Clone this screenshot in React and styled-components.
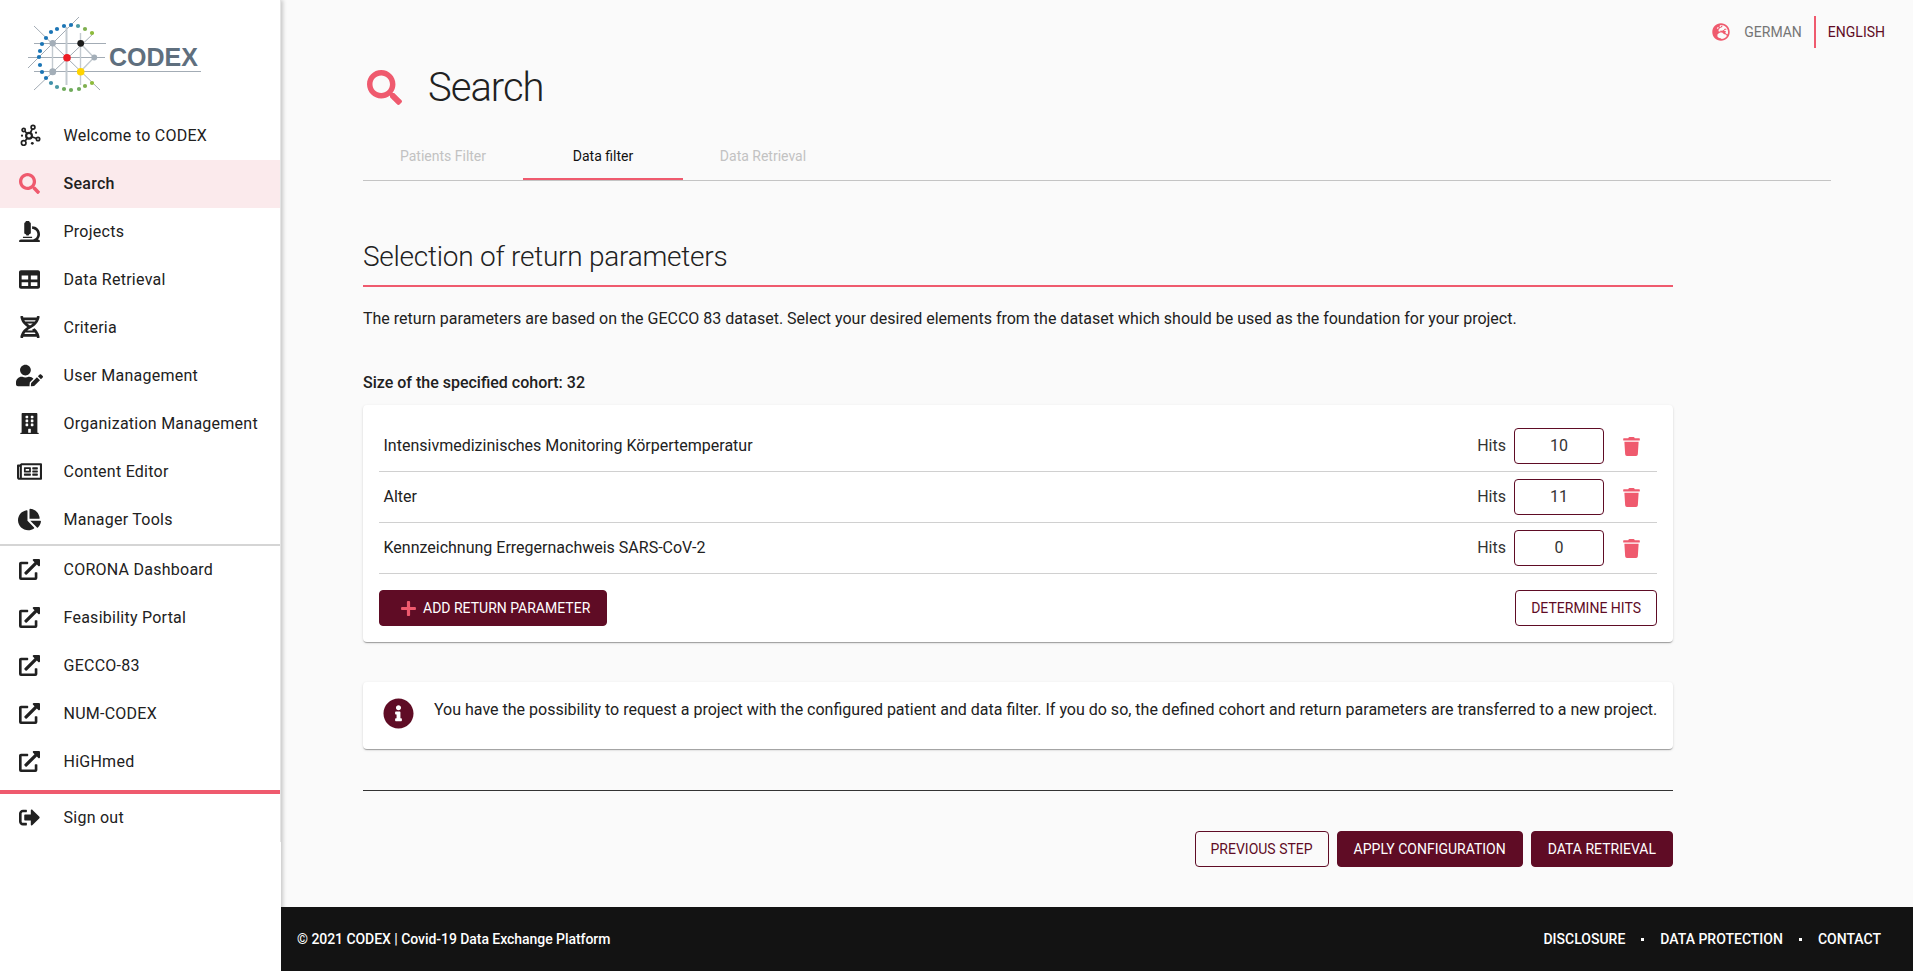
import React from 'react';
import styled, { createGlobalStyle } from 'styled-components';
import {
  FaSearch, FaMicroscope, FaTable, FaDna, FaUserEdit, FaBuilding, FaRegNewspaper,
  FaChartPie, FaExternalLinkAlt, FaSignOutAlt, FaTrash, FaPlus, FaInfoCircle, FaGlobeEurope,
} from 'react-icons/fa';

const Global = createGlobalStyle`
  html, body { margin: 0; padding: 0; background: #fff; }
  * { box-sizing: border-box; }
  body { font-family: Roboto, "Liberation Sans", sans-serif; color: #212121; }
`;

const WINE = '#5f0c25';
const PINK = '#ef5a6e';

const Page = styled.div`
  display: flex;
  width: 1913px;
  height: 971px;
  overflow: hidden;
`;

const SideColumn = styled.div`
  width: 281px;
  flex: none;
  background: #fff;
  position: relative;
  z-index: 1;
  box-shadow: 2px 0 4px rgba(0, 0, 0, 0.2);
`;

const Sidebar = styled.nav`
  height: 842px;
  background: #fff;
  border-right: 1px solid #e4e4e4;
`;

const LogoBox = styled.div`
  height: 112px;
  svg { display: block; }
`;

const NavItem = styled.div`
  height: 48px;
  display: flex;
  align-items: center;
  padding: 0 0 2px 16px;
  font-size: 16px;
  letter-spacing: 0.25px;
  color: #212121;
  font-weight: ${p => (p.$active ? 500 : 400)};
  background: ${p => (p.$active ? '#fbeaec' : 'transparent')};
`;

const NavIcon = styled.span`
  width: 27px;
  margin-right: 20.5px;
  display: flex;
  justify-content: center;
  align-items: center;
  color: ${p => (p.$active ? PINK : '#212121')};
  font-size: ${p => p.$size || 21}px;
`;

const GreyRule = styled.div`
  height: 2px;
  background: #d5d5d5;
`;

const PinkRule = styled.div`
  height: 4px;
  margin-top: 4px;
  background: ${PINK};
`;

const Main = styled.main`
  flex: 1;
  display: flex;
  flex-direction: column;
  background: #fafafa;
`;

const Content = styled.div`
  flex: 1;
  padding: 16px 82px 0 82px;
`;

const LangBar = styled.div`
  height: 32px;
  margin-right: -54px;
  display: flex;
  justify-content: flex-end;
  align-items: center;
  font-size: 14px;
`;

const Globe = styled.span`
  display: flex;
  color: ${PINK};
  font-size: 18px;
  margin-right: 14px;
`;

const Lang = styled.span`
  color: ${p => (p.$active ? WINE : '#757575')};
  padding: ${p => (p.$active ? '0 0 0 12px' : '0 12px 0 0')};
  line-height: 32px;
  border-left: ${p => (p.$active ? `2px solid ${PINK}` : 'none')};
`;

const TitleRow = styled.div`
  height: 58px;
  margin-top: 10px;
  display: flex;
  align-items: center;
  color: #212121;
  svg { color: ${PINK}; font-size: 35px; margin-left: 4px; margin-right: 26px; }
`;

const Title = styled.h1`
  margin: 0;
  font-size: 40px;
  letter-spacing: -1px;
  font-weight: 300;
`;

const Tabs = styled.div`
  display: flex;
  height: 49px;
  margin-top: 16px;
  border-bottom: 1px solid #c4c4c4;
`;

const Tab = styled.div`
  width: 160px;
  height: 48px;
  display: flex;
  align-items: center;
  justify-content: center;
  font-size: 14px;
  color: ${p => (p.$active ? '#111' : '#c2c2c2')};
  border-bottom: ${p => (p.$active ? `2px solid ${PINK}` : 'none')};
  padding-top: ${p => (p.$active ? '2px' : '0')};
`;

const Section = styled.section`
  width: 1310px;
`;

const Heading = styled.h2`
  margin: 53px 0 0;
  height: 53px;
  font-size: 28px;
  line-height: 46px;
  letter-spacing: -0.25px;
  font-weight: 300;
  border-bottom: 2px solid ${PINK};
`;

const Lead = styled.p`
  margin: 20px 0 0;
  font-size: 16px;
  line-height: 24px;
`;

const Cohort = styled.div`
  margin-top: 40px;
  font-size: 16px;
  line-height: 24px;
  font-weight: 500;
`;

const Card = styled.div`
  background: #fff;
  border-radius: 4px;
  box-shadow: 0 2px 1px -1px rgba(0, 0, 0, 0.2), 0 1px 1px 0 rgba(0, 0, 0, 0.14), 0 1px 3px 0 rgba(0, 0, 0, 0.12);
`;

const ParamCard = styled(Card)`
  margin-top: 10px;
  padding: 16px 16px 16px;
`;

const ParamRow = styled.div`
  height: 51px;
  display: flex;
  align-items: center;
  padding-left: 4.5px;
  border-bottom: 1px solid #d0d0d0;
  font-size: 16px;
`;

const ParamName = styled.span`
  flex: 1;
  padding-bottom: 2px;
`;

const Hits = styled.span`
  margin-right: 8px;
  padding-bottom: 2px;
  color: #333;
`;

const HitsInput = styled.div`
  width: 90px;
  height: 36px;
  padding-bottom: 2px;
  display: flex;
  align-items: center;
  justify-content: center;
  border: 1px solid ${WINE};
  border-radius: 4px;
  color: #333;
`;

const Trash = styled.span`
  width: 53px;
  padding-left: 2px;
  display: flex;
  justify-content: center;
  color: ${PINK};
  font-size: 19px;
`;

const Button = styled.button`
  height: 36px;
  padding: 0 ${p => (p.$filled ? 16 : 15)}px;
  display: inline-flex;
  align-items: center;
  font-family: inherit;
  font-size: 14px;
  font-weight: 400;
  text-transform: uppercase;
  border-radius: 4px;
  border: 1px solid ${WINE};
  color: ${p => (p.$filled ? '#fff' : WINE)};
  background: ${p => (p.$filled ? WINE : 'transparent')};
`;

const AddIcon = styled.span`
  display: flex;
  color: ${PINK};
  font-size: 17px;
  margin: 0 6px 0 4px;
`;

const CardActions = styled.div`
  margin-top: 16px;
  display: flex;
  justify-content: space-between;
`;

const InfoCard = styled(Card)`
  margin-top: 40px;
  height: 67px;
  padding: 16px 0 0 20px;
  display: flex;
  font-size: 16px;
  line-height: 24px;
  white-space: nowrap;
`;

const InfoIcon = styled.span`
  display: flex;
  margin-right: 20px;
  color: ${WINE};
  font-size: 31px;
`;

const DarkRule = styled.div`
  margin-top: 41px;
  height: 1px;
  background: #333;
`;

const StepActions = styled.div`
  margin-top: 40px;
  display: flex;
  justify-content: flex-end;
  gap: 8px;
`;

const Footer = styled.footer`
  height: 64px;
  flex: none;
  position: relative;
  z-index: 2;
  padding: 0 32px 0 16px;
  background: #131313;
  color: #fff;
  font-size: 14px;
  font-weight: 500;
  display: flex;
  align-items: center;
  justify-content: space-between;
`;

const Copyright = styled.span`
  letter-spacing: -0.05px;
`;

const FooterLinks = styled.div`
  display: flex;
  align-items: center;
  gap: 16px;
`;

const Dot = styled.span`
  width: 3px;
  height: 3px;
  background: #fff;
`;

const ARC = [
  [92, 33, '#8dbb3a'], [85, 29, '#7fb04f'], [78, 26, '#4a9aa5'], [71, 25, '#1c75b5'], [64, 26, '#1c75b5'],
  [57, 29, '#1c75b5'], [51, 32, '#1c75b5'], [46, 38, '#1c75b5'], [42, 44, '#1c75b5'], [40, 51, '#1c75b5'],
  [39, 57, '#1c75b5'], [40, 65, '#1c75b5'], [42, 72, '#1c75b5'], [46, 78, '#1c75b5'], [51, 83, '#3f8fa8'],
  [57, 87, '#4a9aa5'], [64, 89, '#6fab5c'], [71, 90, '#6fab5c'], [79, 89, '#6fab5c'], [85, 86, '#7fb04f'], [92, 83, '#8dbb3a'],
];

const Logo = () => (
  <svg width="210" height="112" viewBox="0 0 210 112">
    <g stroke="#a3acb5" strokeWidth="1" fill="none">
      <path d="M34 43.5H106M28 57.5H105M34 71.5H201M34 26L100 90M79 17L28 68M34 90L94 33" />
      <path d="M80.5 33V85M52.5 40V75" stroke="#c3cad0" strokeWidth="1.4" />
      <path d="M66.5 27V85" stroke="#c3cad0" strokeWidth="2" />
      <path d="M80.5 43.5L94 57.5L80.5 71.5" stroke="#c3cad0" strokeWidth="1.4" />
    </g>
    {ARC.map(([x, y, c]) => <circle key={`${x}-${y}`} cx={x} cy={y} r="2.1" fill={c} />)}
    <circle cx="52.7" cy="43.3" r="3.2" fill="#a3aeb8" />
    <circle cx="80.7" cy="43.3" r="3.4" fill="#1c1c1c" />
    <circle cx="67" cy="57.7" r="3.8" fill="#ed1c24" />
    <circle cx="94.3" cy="57.5" r="2.9" fill="#a3aeb8" />
    <circle cx="52.7" cy="71.7" r="3.5" fill="#a3aeb8" />
    <circle cx="80.7" cy="71.7" r="3.8" fill="#ffd400" />
    <text x="109" y="66" fontFamily="'Liberation Sans', sans-serif" fontWeight="700" fontSize="25" fill="#5f6f7e">CODEX</text>
  </svg>
);

const HubIcon = () => (
  <svg width="22" height="22" viewBox="0 0 22 22" fill="none" stroke="#212121" strokeWidth="1.7">
    <path d="M10 11.7L4.7 6M10 11.7L14 3.3M10 11.7L19 15M10 11.7L4.7 19" />
    <circle cx="10" cy="11.7" r="2.9" fill="#fff" strokeWidth="2.2" />
    <circle cx="4.7" cy="6" r="1.6" fill="#fff" />
    <circle cx="14" cy="3.3" r="1.9" fill="#fff" />
    <circle cx="19" cy="15" r="1.7" fill="#fff" />
    <circle cx="4.7" cy="19" r="2.3" fill="#fff" />
    <circle cx="3" cy="11.7" r="1.1" fill="#212121" stroke="none" />
    <circle cx="17" cy="8.7" r="1.1" fill="#212121" stroke="none" />
    <circle cx="13.3" cy="19.3" r="1.4" fill="#212121" stroke="none" />
  </svg>
);

const MAIN_NAV = [
  { label: 'Welcome to CODEX', icon: <HubIcon /> },
  { label: 'Search', icon: <FaSearch />, active: true },
  { label: 'Projects', icon: <FaMicroscope /> },
  { label: 'Data Retrieval', icon: <FaTable /> },
  { label: 'Criteria', icon: <FaDna />, size: 22 },
  { label: 'User Management', icon: <FaUserEdit />, size: 27 },
  { label: 'Organization Management', icon: <FaBuilding /> },
  { label: 'Content Editor', icon: <FaRegNewspaper />, size: 25 },
  { label: 'Manager Tools', icon: <FaChartPie />, size: 23 },
];

const LINKS = ['CORONA Dashboard', 'Feasibility Portal', 'GECCO-83', 'NUM-CODEX', 'HiGHmed'];

const PARAMS = [
  { name: 'Intensivmedizinisches Monitoring Körpertemperatur', hits: 10 },
  { name: 'Alter', hits: 11 },
  { name: 'Kennzeichnung Erregernachweis SARS-CoV-2', hits: 0 },
];

const App = () => (
  <Page>
    <Global />
    <SideColumn>
      <Sidebar>
        <LogoBox><Logo /></LogoBox>
        {MAIN_NAV.map(item => (
          <NavItem key={item.label} $active={item.active}>
            <NavIcon $active={item.active} $size={item.size}>{item.icon}</NavIcon>
            {item.label}
          </NavItem>
        ))}
        <GreyRule />
        {LINKS.map(label => (
          <NavItem key={label}>
            <NavIcon><FaExternalLinkAlt /></NavIcon>
            {label}
          </NavItem>
        ))}
        <PinkRule />
        <NavItem>
          <NavIcon><FaSignOutAlt /></NavIcon>
          Sign out
        </NavItem>
      </Sidebar>
    </SideColumn>
    <Main>
      <Content>
        <LangBar>
          <Globe><FaGlobeEurope /></Globe>
          <Lang>GERMAN</Lang>
          <Lang $active>ENGLISH</Lang>
        </LangBar>
        <TitleRow>
          <FaSearch />
          <Title>Search</Title>
        </TitleRow>
        <Tabs>
          <Tab>Patients Filter</Tab>
          <Tab $active>Data filter</Tab>
          <Tab>Data Retrieval</Tab>
        </Tabs>
        <Section>
          <Heading>Selection of return parameters</Heading>
          <Lead>The return parameters are based on the GECCO 83 dataset. Select your desired elements from the dataset which should be used as the foundation for your project.</Lead>
          <Cohort>Size of the specified cohort: 32</Cohort>
          <ParamCard>
            {PARAMS.map(p => (
              <ParamRow key={p.name}>
                <ParamName>{p.name}</ParamName>
                <Hits>Hits</Hits>
                <HitsInput>{p.hits}</HitsInput>
                <Trash><FaTrash /></Trash>
              </ParamRow>
            ))}
            <CardActions>
              <Button $filled>
                <AddIcon><FaPlus /></AddIcon>
                Add return parameter
              </Button>
              <Button>Determine hits</Button>
            </CardActions>
          </ParamCard>
          <InfoCard>
            <InfoIcon><FaInfoCircle /></InfoIcon>
            You have the possibility to request a project with the configured patient and data filter. If you do so, the defined cohort and return parameters are transferred to a new project.
          </InfoCard>
          <DarkRule />
          <StepActions>
            <Button>Previous step</Button>
            <Button $filled>Apply configuration</Button>
            <Button $filled>Data retrieval</Button>
          </StepActions>
        </Section>
      </Content>
      <Footer>
        <Copyright>© 2021 CODEX | Covid-19 Data Exchange Platform</Copyright>
        <FooterLinks>
          <span>DISCLOSURE</span>
          <Dot />
          <span>DATA PROTECTION</span>
          <Dot />
          <span>CONTACT</span>
        </FooterLinks>
      </Footer>
    </Main>
  </Page>
);

export default App;
